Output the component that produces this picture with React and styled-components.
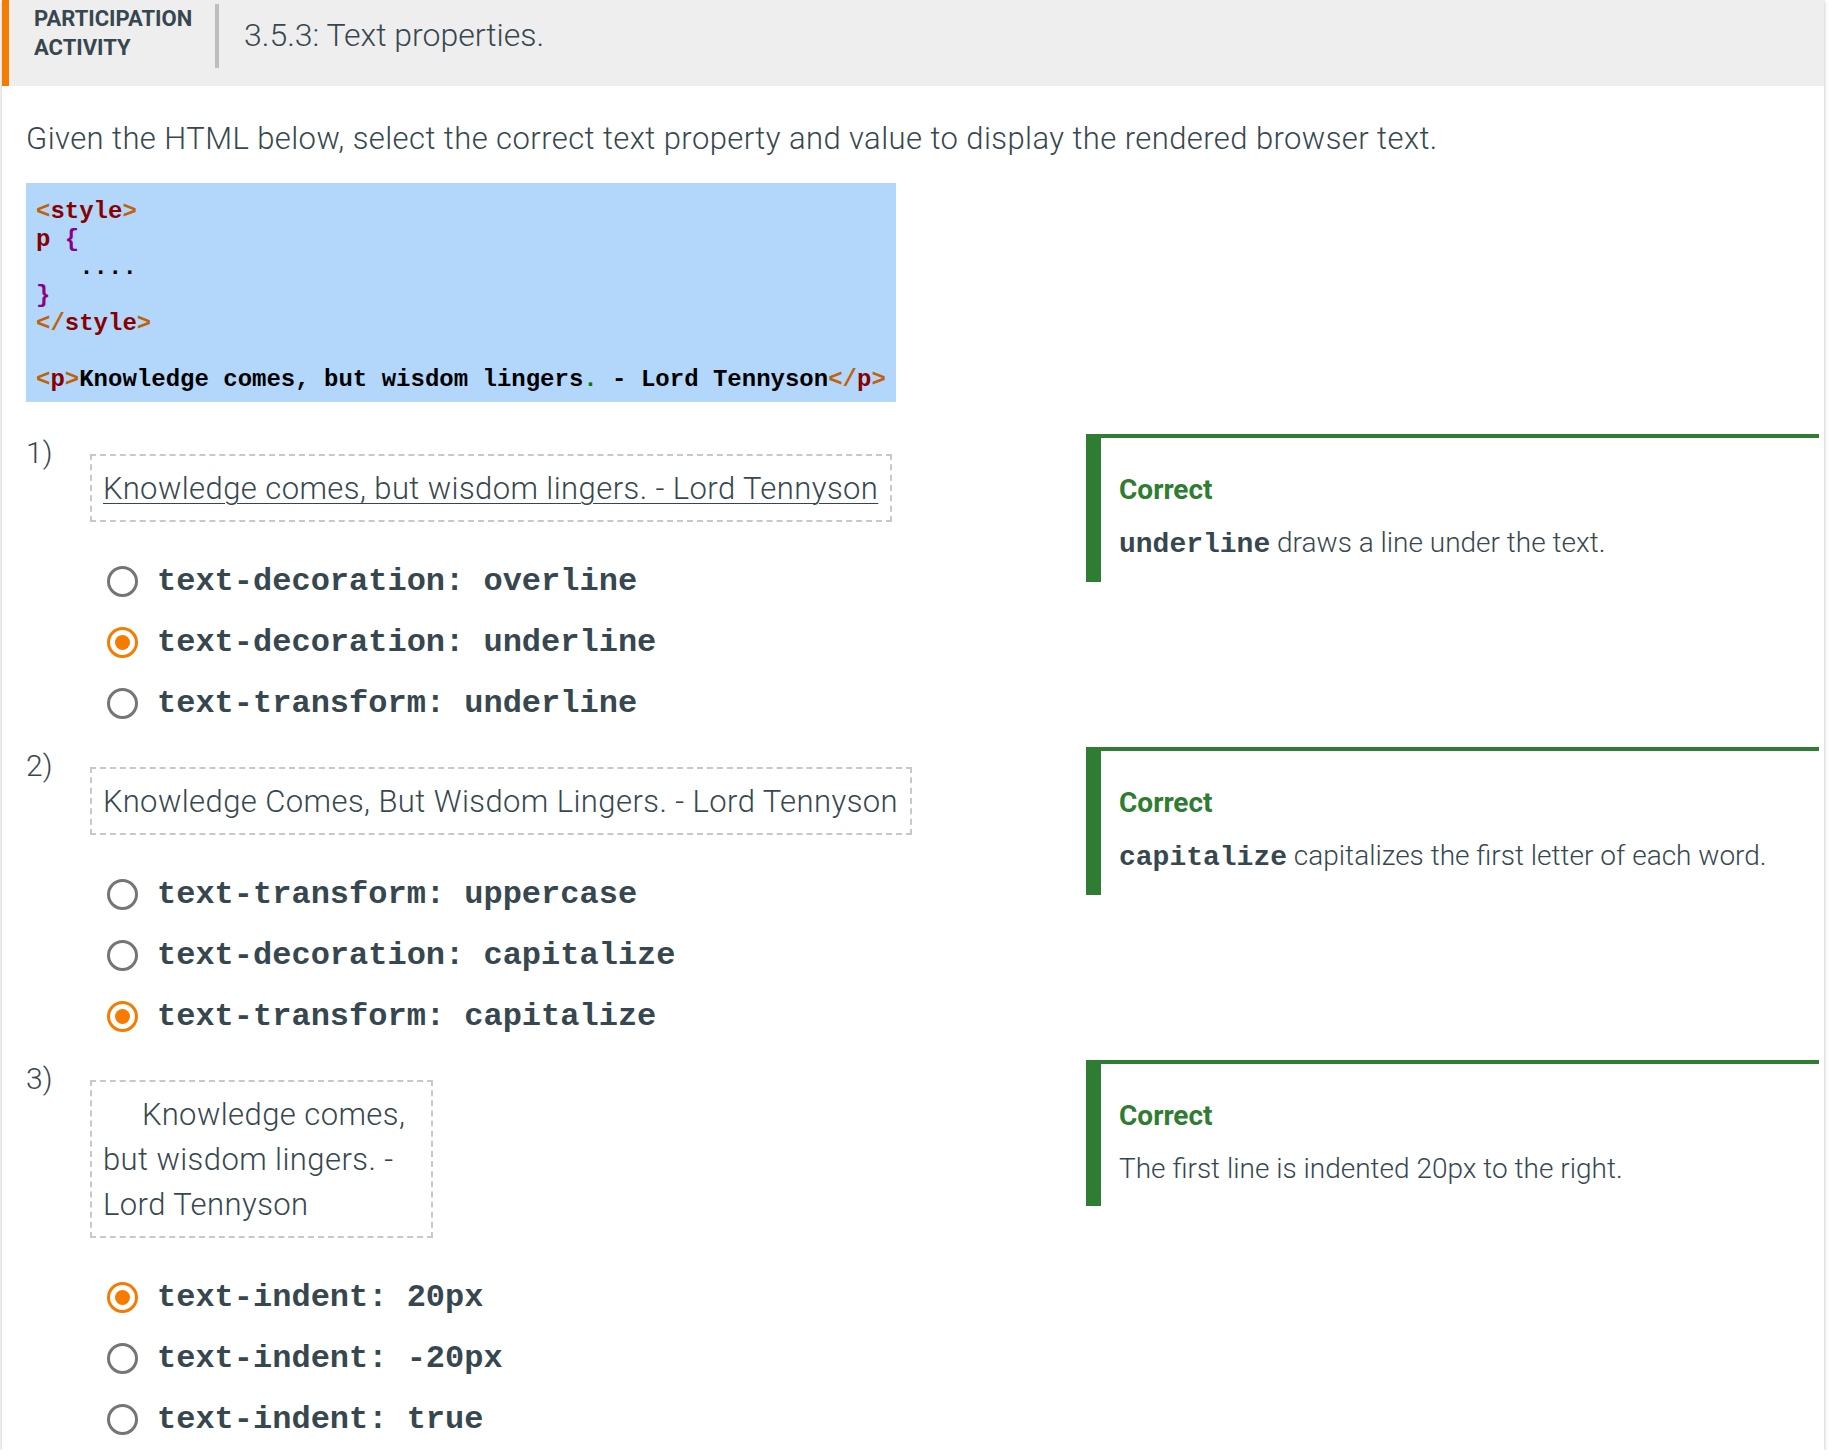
import React from 'react';
import styled, { createGlobalStyle, css } from 'styled-components';

const Global = createGlobalStyle`
  html, body { margin: 0; padding: 0; background: #ffffff; }
  body { font-family: Roboto, "Noto Sans", "Liberation Sans", sans-serif; color: #37474f; }
  * { box-sizing: border-box; }
`;

const Card = styled.section`
  margin: 0 6px 0 2px;
  width: 1822px;
  background: #ffffff;
  box-shadow: 0 1px 4px rgba(0, 0, 0, 0.28);
`;

const Header = styled.header`
  display: flex;
  align-items: flex-start;
  height: 86px;
  background: #eeeeee;
  border-left: 7px solid #f57c00;
  padding: 4px 0 0 25px;
`;

const Label = styled.div`
  width: 181px;
  font-weight: 700;
  font-size: 22px;
  line-height: 29px;
  color: #37474f;
  text-transform: uppercase;
`;

const Divider = styled.div`
  width: 4px;
  height: 64px;
  background: #bdbdbd;
`;

const Title = styled.h1`
  margin: 9px 0 0 25px;
  font-size: 32px;
  font-weight: 300;
  line-height: 45px;
  color: #37474f;
`;

const Body = styled.div`
  padding: 30px 0 0 24px;
`;

const Instruction = styled.p`
  margin: 0 0 22px;
  font-size: 31px;
  letter-spacing: 0.42px;
  font-weight: 300;
  line-height: 45px;
`;

const CodeBox = styled.pre`
  margin: 0 0 28px;
  width: 870px;
  background: #b3d7fb;
  padding: 15px 10px 8px;
  font-family: "Liberation Mono", "Courier New", monospace;
  font-weight: 700;
  font-size: 24px;
  line-height: 28px;
  color: #000000;
  white-space: pre;
`;

const Tok = styled.span`
  color: ${(p) =>
    ({ br: '#c0620a', tag: '#880000', brace: '#8b008b', dot: '#008000' }[p.$k] || '#000000')};
`;

const Question = styled.div`
  display: flex;
  align-items: flex-start;
  & + & { margin-top: 9px; }
`;

const Left = styled.div`
  display: flex;
  width: 1060px;
  flex-shrink: 0;
`;

const Num = styled.div`
  width: 64px;
  font-size: 30px;
  font-weight: 300;
  line-height: 45px;
`;

const Content = styled.div`
  display: flex;
  flex-direction: column;
  align-items: flex-start;
`;

const QuoteBox = styled.div`
  margin-top: 24px;
  border: 2px dashed #c8c8c8;
  padding: 10px 12px 9px 11px;
  font-size: 31px;
  letter-spacing: 0.42px;
  font-weight: 300;
  line-height: 45px;
  color: #37474f;
  ${(p) => p.$width && css`width: ${p.$width}px;`}
  ${(p) => p.$underline && css`text-decoration: underline; text-underline-offset: 4px; text-decoration-thickness: 1px;`}
  ${(p) => p.$capitalize && css`text-transform: capitalize;`}
  ${(p) => p.$indent && css`text-indent: ${p.$indent}px;`}
`;

const Options = styled.div`
  margin-top: 29px;
  display: flex;
  flex-direction: column;
`;

const OptionRow = styled.label`
  display: flex;
  align-items: center;
  gap: 19px;
  height: 61px;
  padding-left: 17px;
`;

const Radio = styled.span`
  position: relative;
  width: 31px;
  height: 31px;
  flex-shrink: 0;
  border-radius: 50%;
  border: 3px solid ${(p) => (p.$on ? '#f57c00' : '#757575')};
  ${(p) =>
    p.$on &&
    css`
      &::after {
        content: '';
        position: absolute;
        left: 50%;
        top: 50%;
        width: 15px;
        height: 15px;
        margin: -7.5px 0 0 -7.5px;
        border-radius: 50%;
        background: #f57c00;
      }
    `}
`;

const OptionText = styled.span`
  font-family: "Liberation Mono", "Courier New", monospace;
  font-weight: 700;
  font-size: 32px;
  color: #37474f;
  white-space: pre;
`;

const Feedback = styled.div`
  flex: 1;
  margin: 4px 5px 0 0;
  border-top: 4px solid #2e7d32;
  border-left: 15px solid #2e7d32;
  padding: 31px 20px 16px 18px;
`;

const FeedbackTitle = styled.div`
  color: #2e7d32;
  font-weight: 700;
  font-size: 28px;
  line-height: 42px;
`;

const FeedbackText = styled.div`
  margin-top: 11px;
  font-size: 28px;
  font-weight: 300;
  line-height: 42px;
  color: #37474f;
`;

const Mono = styled.code`
  font-family: "Liberation Mono", "Courier New", monospace;
  font-weight: 700;
  font-size: 28px;
`;

const quote = 'Knowledge comes, but wisdom lingers. - Lord Tennyson';

const questions = [
  {
    n: '1)',
    box: { $underline: true },
    options: ['text-decoration: overline', 'text-decoration: underline', 'text-transform: underline'],
    selected: 1,
    feedback: (
      <>
        <Mono>underline</Mono> draws a line under the text.
      </>
    ),
  },
  {
    n: '2)',
    box: { $capitalize: true },
    options: ['text-transform: uppercase', 'text-decoration: capitalize', 'text-transform: capitalize'],
    selected: 2,
    feedback: (
      <>
        <Mono>capitalize</Mono> capitalizes the first letter of each word.
      </>
    ),
  },
  {
    n: '3)',
    box: { $width: 343, $indent: 39 },
    options: ['text-indent: 20px', 'text-indent: -20px', 'text-indent: true'],
    selected: 0,
    feedback: <>The first line is indented 20px to the right.</>,
  },
];

export default function App() {
  return (
    <>
      <Global />
      <Card>
        <Header>
          <Label>
            Participation
            <br />
            Activity
          </Label>
          <Divider />
          <Title>3.5.3: Text properties.</Title>
        </Header>
        <Body>
          <Instruction>
            Given the HTML below, select the correct text property and value to display the rendered browser text.
          </Instruction>
          <CodeBox>
            <Tok $k="br">&lt;</Tok>
            <Tok $k="tag">style</Tok>
            <Tok $k="br">&gt;</Tok>
            {'\n'}
            <Tok $k="tag">p</Tok> <Tok $k="brace">{'{'}</Tok>
            {'\n   ....\n'}
            <Tok $k="brace">{'}'}</Tok>
            {'\n'}
            <Tok $k="br">&lt;/</Tok>
            <Tok $k="tag">style</Tok>
            <Tok $k="br">&gt;</Tok>
            {'\n\n'}
            <Tok $k="br">&lt;</Tok>
            <Tok $k="tag">p</Tok>
            <Tok $k="br">&gt;</Tok>
            Knowledge comes, but wisdom lingers<Tok $k="dot">.</Tok> - Lord Tennyson
            <Tok $k="br">&lt;/</Tok>
            <Tok $k="tag">p</Tok>
            <Tok $k="br">&gt;</Tok>
          </CodeBox>

          {questions.map((q) => (
            <Question key={q.n}>
              <Left>
                <Num>{q.n}</Num>
                <Content>
                  <QuoteBox {...q.box}>{quote}</QuoteBox>
                  <Options>
                    {q.options.map((o, i) => (
                      <OptionRow key={o}>
                        <Radio $on={i === q.selected} />
                        <OptionText>{o}</OptionText>
                      </OptionRow>
                    ))}
                  </Options>
                </Content>
              </Left>
              <Feedback>
                <FeedbackTitle>Correct</FeedbackTitle>
                <FeedbackText>{q.feedback}</FeedbackText>
              </Feedback>
            </Question>
          ))}
        </Body>
      </Card>
    </>
  );
}
